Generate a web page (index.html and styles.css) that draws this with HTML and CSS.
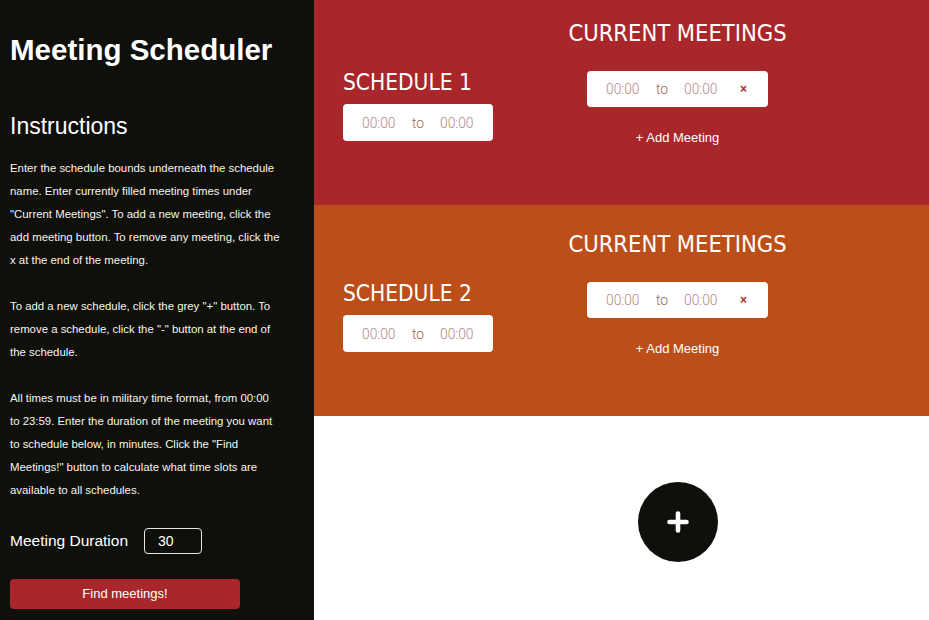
FILE: index.html
```html
<!DOCTYPE html>
<html lang="en">
<head>
<meta charset="utf-8">
<title>Meeting Scheduler</title>
<link rel="stylesheet" href="styles.css">
</head>
<body>
<div class="app">
  <aside class="sidebar">
    <h1 class="title">Meeting Scheduler</h1>
    <h2 class="subtitle">Instructions</h2>
    <p class="text">Enter the schedule bounds underneath the schedule<br>name. Enter currently filled meeting times under<br>"Current Meetings". To add a new meeting, click the<br>add meeting button. To remove any meeting, click the<br>x at the end of the meeting.</p>
    <p class="text">To add a new schedule, click the grey "+" button. To<br>remove a schedule, click the "-" button at the end of<br>the schedule.</p>
    <p class="text">All times must be in military time format, from 00:00<br>to 23:59. Enter the duration of the meeting you want<br>to schedule below, in minutes. Click the "Find<br>Meetings!" button to calculate what time slots are<br>available to all schedules.</p>
    <div class="duration">
      <span class="duration-label">Meeting Duration</span>
      <span class="duration-input">30</span>
    </div>
    <button class="find">Find meetings!</button>
  </aside>

  <main class="main">
    <section class="schedule schedule-first">
      <div class="bounds">
        <h3 class="schedule-name">SCHEDULE 1</h3>
        <div class="time-box">
          <span class="time">00:00</span><span class="to">to</span><span class="time">00:00</span>
        </div>
      </div>
      <div class="meetings">
        <h3 class="meetings-title">CURRENT MEETINGS</h3>
        <div class="time-box meeting-box">
          <span class="time">00:00</span><span class="to">to</span><span class="time">00:00</span><span class="remove">×</span>
        </div>
        <div class="add-meeting">+ Add Meeting</div>
      </div>
    </section>

    <section class="schedule schedule-second">
      <div class="bounds">
        <h3 class="schedule-name">SCHEDULE 2</h3>
        <div class="time-box">
          <span class="time">00:00</span><span class="to">to</span><span class="time">00:00</span>
        </div>
      </div>
      <div class="meetings">
        <h3 class="meetings-title">CURRENT MEETINGS</h3>
        <div class="time-box meeting-box">
          <span class="time">00:00</span><span class="to">to</span><span class="time">00:00</span><span class="remove">×</span>
        </div>
        <div class="add-meeting">+ Add Meeting</div>
      </div>
    </section>

    <div class="add-area">
      <div class="add-spacer"></div>
      <div class="add-col">
        <button class="add-schedule" aria-label="Add schedule">
          <svg width="22" height="22" viewBox="0 0 22 22"><path d="M11 2.5v17M2.5 11h17" stroke="#fff" stroke-width="4.6" stroke-linecap="round" fill="none"/></svg>
        </button>
      </div>
    </div>
  </main>
</div>
</body>
</html>
```

FILE: styles.css
```css
* { box-sizing: border-box; }

html, body {
  margin: 0;
  padding: 0;
  height: 100%;
}

body {
  font-family: "Liberation Sans", Arial, sans-serif;
  color: #fff;
  background: #fff;
}

.app {
  display: flex;
  height: 620px;
  overflow: hidden;
}

/* Sidebar */
.sidebar {
  width: 314px;
  flex: 0 0 314px;
  background: #0f0f0c;
  padding: 30px 10px 0 10px;
}

.title {
  margin: 0;
  font-weight: 700;
  font-size: 29.5px;
  line-height: 40px;
  white-space: nowrap;
  color: #fff;
}

.subtitle {
  margin: 42px 0 0 0;
  font-weight: 400;
  font-size: 23px;
  line-height: 28px;
  color: #fff;
}

.text {
  margin: 16.6px 0 0 0;
  font-size: 11.4px;
  line-height: 23px;
  color: #f7f5ec;
  width: 294px;
}

.text + .text {
  margin-top: 23px;
}

.duration {
  display: flex;
  align-items: center;
  margin-top: 26.4px;
  gap: 16px;
}

.duration-label {
  font-size: 15.5px;
  color: #fff;
}

.duration-input {
  width: 58px;
  height: 26px;
  border: 1px solid #e6e6e6;
  border-radius: 4px;
  padding-left: 13px;
  font-size: 14px;
  line-height: 24px;
  color: #fff;
}

.find {
  display: block;
  margin-top: 25px;
  width: 230px;
  height: 30px;
  border: none;
  border-radius: 4px;
  background: #a9272b;
  color: #fff;
  font-family: "Liberation Sans", Arial, sans-serif;
  font-size: 13px;
  padding: 0;
}

/* Main */
.main {
  flex: 1;
  display: flex;
  flex-direction: column;
}

.schedule {
  display: flex;
  padding: 19px 67px 0 29px;
}

.schedule-first {
  height: 205px;
  background: #a9272b;
}

.schedule-second {
  height: 211px;
  padding-top: 25px;
  background: #bc4f19;
}

.bounds {
  width: 150px;
  flex: 0 0 150px;
  margin-top: 50px;
}

.schedule-name {
  margin: 0 0 9px 0;
  font-family: "DejaVu Sans Condensed", "Liberation Sans", sans-serif;
  font-weight: 400;
  font-size: 22.5px;
  line-height: 26px;
  color: #fff;
}

.time-box {
  display: flex;
  align-items: center;
  height: 37px;
  width: 150px;
  background: #fff;
  border-radius: 4px;
  padding-left: 19px;
  font-family: Roboto, "Liberation Sans", sans-serif;
  font-weight: 300;
  font-size: 13.8px;
}

.time {
  width: 33px;
  color: #b58788;
}

.to {
  width: 11px;
  margin: 0 17px 0 17px;
  color: #a2665c;
}

.meetings {
  flex: 1;
  display: flex;
  flex-direction: column;
  align-items: center;
}

.meetings-title {
  margin: 0 0 24px 0;
  font-family: "DejaVu Sans Condensed", "Liberation Sans", sans-serif;
  font-weight: 400;
  font-size: 23.5px;
  line-height: 28px;
  color: #fff;
}

.meeting-box {
  width: 181px;
  height: 36px;
}

.remove {
  margin-left: 23px;
  font-family: "Liberation Sans", Arial, sans-serif;
  font-weight: 700;
  font-size: 12px;
  color: #a52a2a;
}

.add-meeting {
  margin-top: 22px;
  font-size: 13px;
  line-height: 18px;
  color: #fff;
}

.add-area {
  flex: 1;
  display: flex;
  padding: 0 67px 0 29px;
}

.add-spacer {
  width: 150px;
  flex: 0 0 150px;
}

.add-col {
  flex: 1;
  display: flex;
  justify-content: center;
}

.add-schedule {
  margin-top: 66px;
  width: 80px;
  height: 80px;
  border-radius: 50%;
  border: none;
  background: #0f0f0c;
  display: flex;
  align-items: center;
  justify-content: center;
  padding: 0;
}

.add-schedule svg { display: block; }
```
